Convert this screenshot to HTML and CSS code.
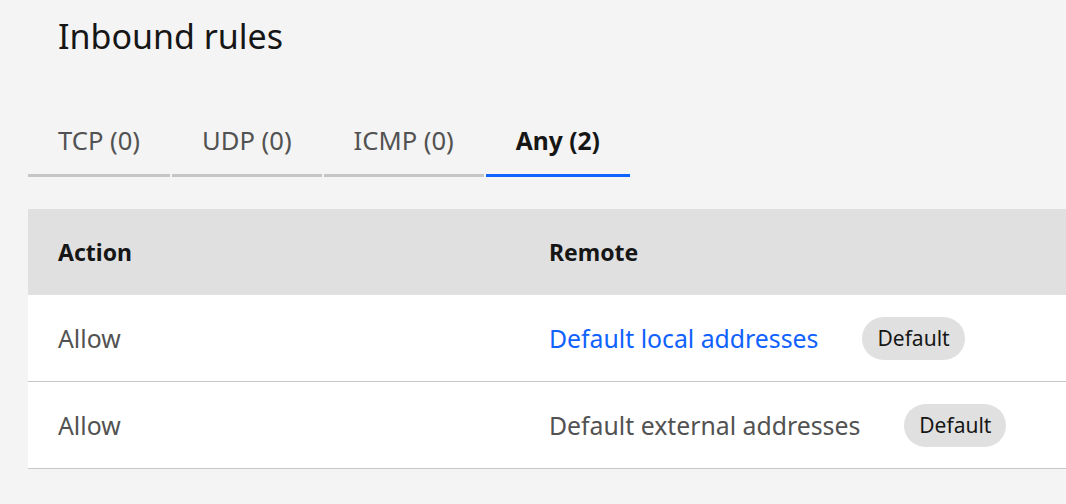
FILE: index.html
```html
<!DOCTYPE html>
<html>
<head>
<meta charset="utf-8">
<link rel="stylesheet" href="styles.css">
</head>
<body>
<div class="page">
  <h1 class="title">Inbound rules</h1>
  <div class="tabs">
    <div class="tab">TCP (0)</div>
    <div class="tab">UDP (0)</div>
    <div class="tab">ICMP (0)</div>
    <div class="tab active">Any (2)</div>
  </div>
  <div class="table">
    <div class="row head">
      <div class="cell c1">Action</div>
      <div class="cell c2">Remote</div>
    </div>
    <div class="row">
      <div class="cell c1">Allow</div>
      <div class="cell c2"><a class="link" href="#">Default local addresses</a><span class="tag">Default</span></div>
    </div>
    <div class="row">
      <div class="cell c1">Allow</div>
      <div class="cell c2"><span>Default external addresses</span><span class="tag">Default</span></div>
    </div>
  </div>
</div>
</body>
</html>
```
FILE: styles.css
```css
html, body {
  margin: 0;
  padding: 0;
  background: #f4f4f4;
  font-family: "Noto Sans", "Open Sans", sans-serif;
  color: #525252;
}
.page {
  padding-left: 28px;
  overflow: hidden;
  height: 504px;
}
.title {
  margin: 0;
  padding: 12px 0 0 30px;
  height: 48px;
  line-height: 48px;
  font-size: 34px;
  font-weight: 400;
  color: #161616;
}
.tabs {
  display: flex;
  margin-top: 64px;
}
.tab {
  padding: 1px 30px 17px;
  height: 32px;
  line-height: 32px;
  font-size: 25.6px;
  color: #525252;
  border-bottom: 3px solid #c6c6c6;
  margin-right: 2px;
}
.tab.active {
  color: #161616;
  font-weight: 700;
  font-size: 24.6px;
  border-bottom-color: #0f62fe;
}
.table {
  margin-top: 32px;
  width: 1038px;
}
.row {
  display: flex;
  align-items: center;
  height: 86px;
  background: #fff;
  border-bottom: 1px solid #c6c6c6;
}
.row.head {
  background: #e0e0e0;
  border-bottom: none;
  color: #161616;
  font-weight: 700;
}
.cell {
  padding-left: 30px;
  font-size: 24.8px;
  display: flex;
  align-items: center;
}
.head .cell { font-size: 23px; }
.c1 { width: 461px; }
.link {
  color: #0f62fe;
  text-decoration: none;
}
.tag {
  margin-left: 44px;
  background: #e0e0e0;
  color: #161616;
  font-size: 21px;
  height: 43px;
  line-height: 43px;
  padding: 0 15px;
  border-radius: 22px;
}
```
